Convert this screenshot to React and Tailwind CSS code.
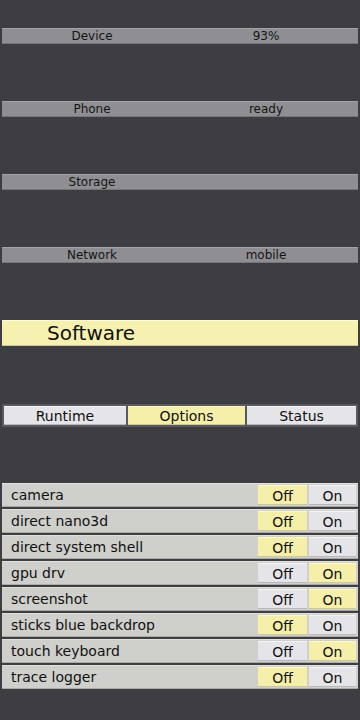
const FONT = { fontFamily: '"DejaVu Sans", "Liberation Sans", sans-serif' };

const INFO = [
  { label: 'Device', value: '93%' },
  { label: 'Phone', value: 'ready' },
  { label: 'Storage', value: '' },
  { label: 'Network', value: 'mobile' },
];

const TABS = ['Runtime', 'Options', 'Status'];

const OPTIONS = [
  { name: 'camera', on: false },
  { name: 'direct nano3d', on: false },
  { name: 'direct system shell', on: false },
  { name: 'gpu drv', on: true },
  { name: 'screenshot', on: true },
  { name: 'sticks blue backdrop', on: false },
  { name: 'touch keyboard', on: true },
  { name: 'trace logger', on: false },
];

const ACTIVE = 'bg-[#f5efa9] border-t-[#fbf8d2] border-b-[#cfc98a]';
const IDLE = 'bg-[#e5e5e9] border-t-[#f6f6f8] border-b-[#b8b8bc]';

function InfoBar({ label, value }) {
  return (
    <div className="mx-[2px] h-4 flex items-center bg-[#8f8f93] border-t border-t-[#a3a3a7] border-b border-b-[#76767a] text-[12px] leading-none text-[#141414]">
      <div className="w-[180px] text-center">{label}</div>
      <div className="w-[168px] text-center">{value}</div>
    </div>
  );
}

function Toggle({ on }) {
  return (
    <div className="flex gap-[2px]">
      <div className={`w-[49px] h-5 flex items-center justify-center pt-[1px] border-t border-b ${on ? IDLE : ACTIVE}`}>Off</div>
      <div className={`w-[47px] h-5 flex items-center justify-center pt-[1px] border-t border-b ${on ? ACTIVE : IDLE}`}>On</div>
    </div>
  );
}

export default function App() {
  return (
    <div className="w-[360px] h-[720px] bg-[#3e3d42] pt-[28px] flex flex-col gap-[57px] overflow-hidden" style={FONT}>
      {INFO.map(i => (
        <InfoBar key={i.label} {...i} />
      ))}

      {/* Section title */}
      <div className="mx-[2px] h-[26px] flex items-center pl-[45px] bg-[#f6f1b0] border-t border-t-[#fcfadc] border-b border-b-[#cdc88c] text-[20px] leading-none text-[#111]">
        Software
      </div>

      {/* Tabs */}
      <div className="mt-[1px] mx-[2px] p-[2px] flex gap-[2px] bg-[#5a595e] text-[14px] leading-none text-[#111]">
        <div className={`w-[122px] h-[19px] flex items-center justify-center pt-[1px] border-t border-b ${IDLE}`}>{TABS[0]}</div>
        <div className={`w-[117px] h-[19px] flex items-center justify-center pt-[1px] border-t border-b ${ACTIVE}`}>{TABS[1]}</div>
        <div className={`flex-1 h-[19px] flex items-center justify-center pt-[1px] border-t border-b ${IDLE}`}>{TABS[2]}</div>
      </div>

      {/* Option rows */}
      <div className="-mt-[1px] flex flex-col gap-[2px] text-[14px] leading-none text-[#111]">
        {OPTIONS.map(o => (
          <div
            key={o.name}
            className="mx-[2px] h-6 flex items-center justify-between pl-[9px] pr-[2px] bg-[#cfcfcb] border-t border-t-[#e2e2de] border-b border-b-[#a9a9a5]"
          >
            <span>{o.name}</span>
            <Toggle on={o.on} />
          </div>
        ))}
      </div>
    </div>
  );
}
